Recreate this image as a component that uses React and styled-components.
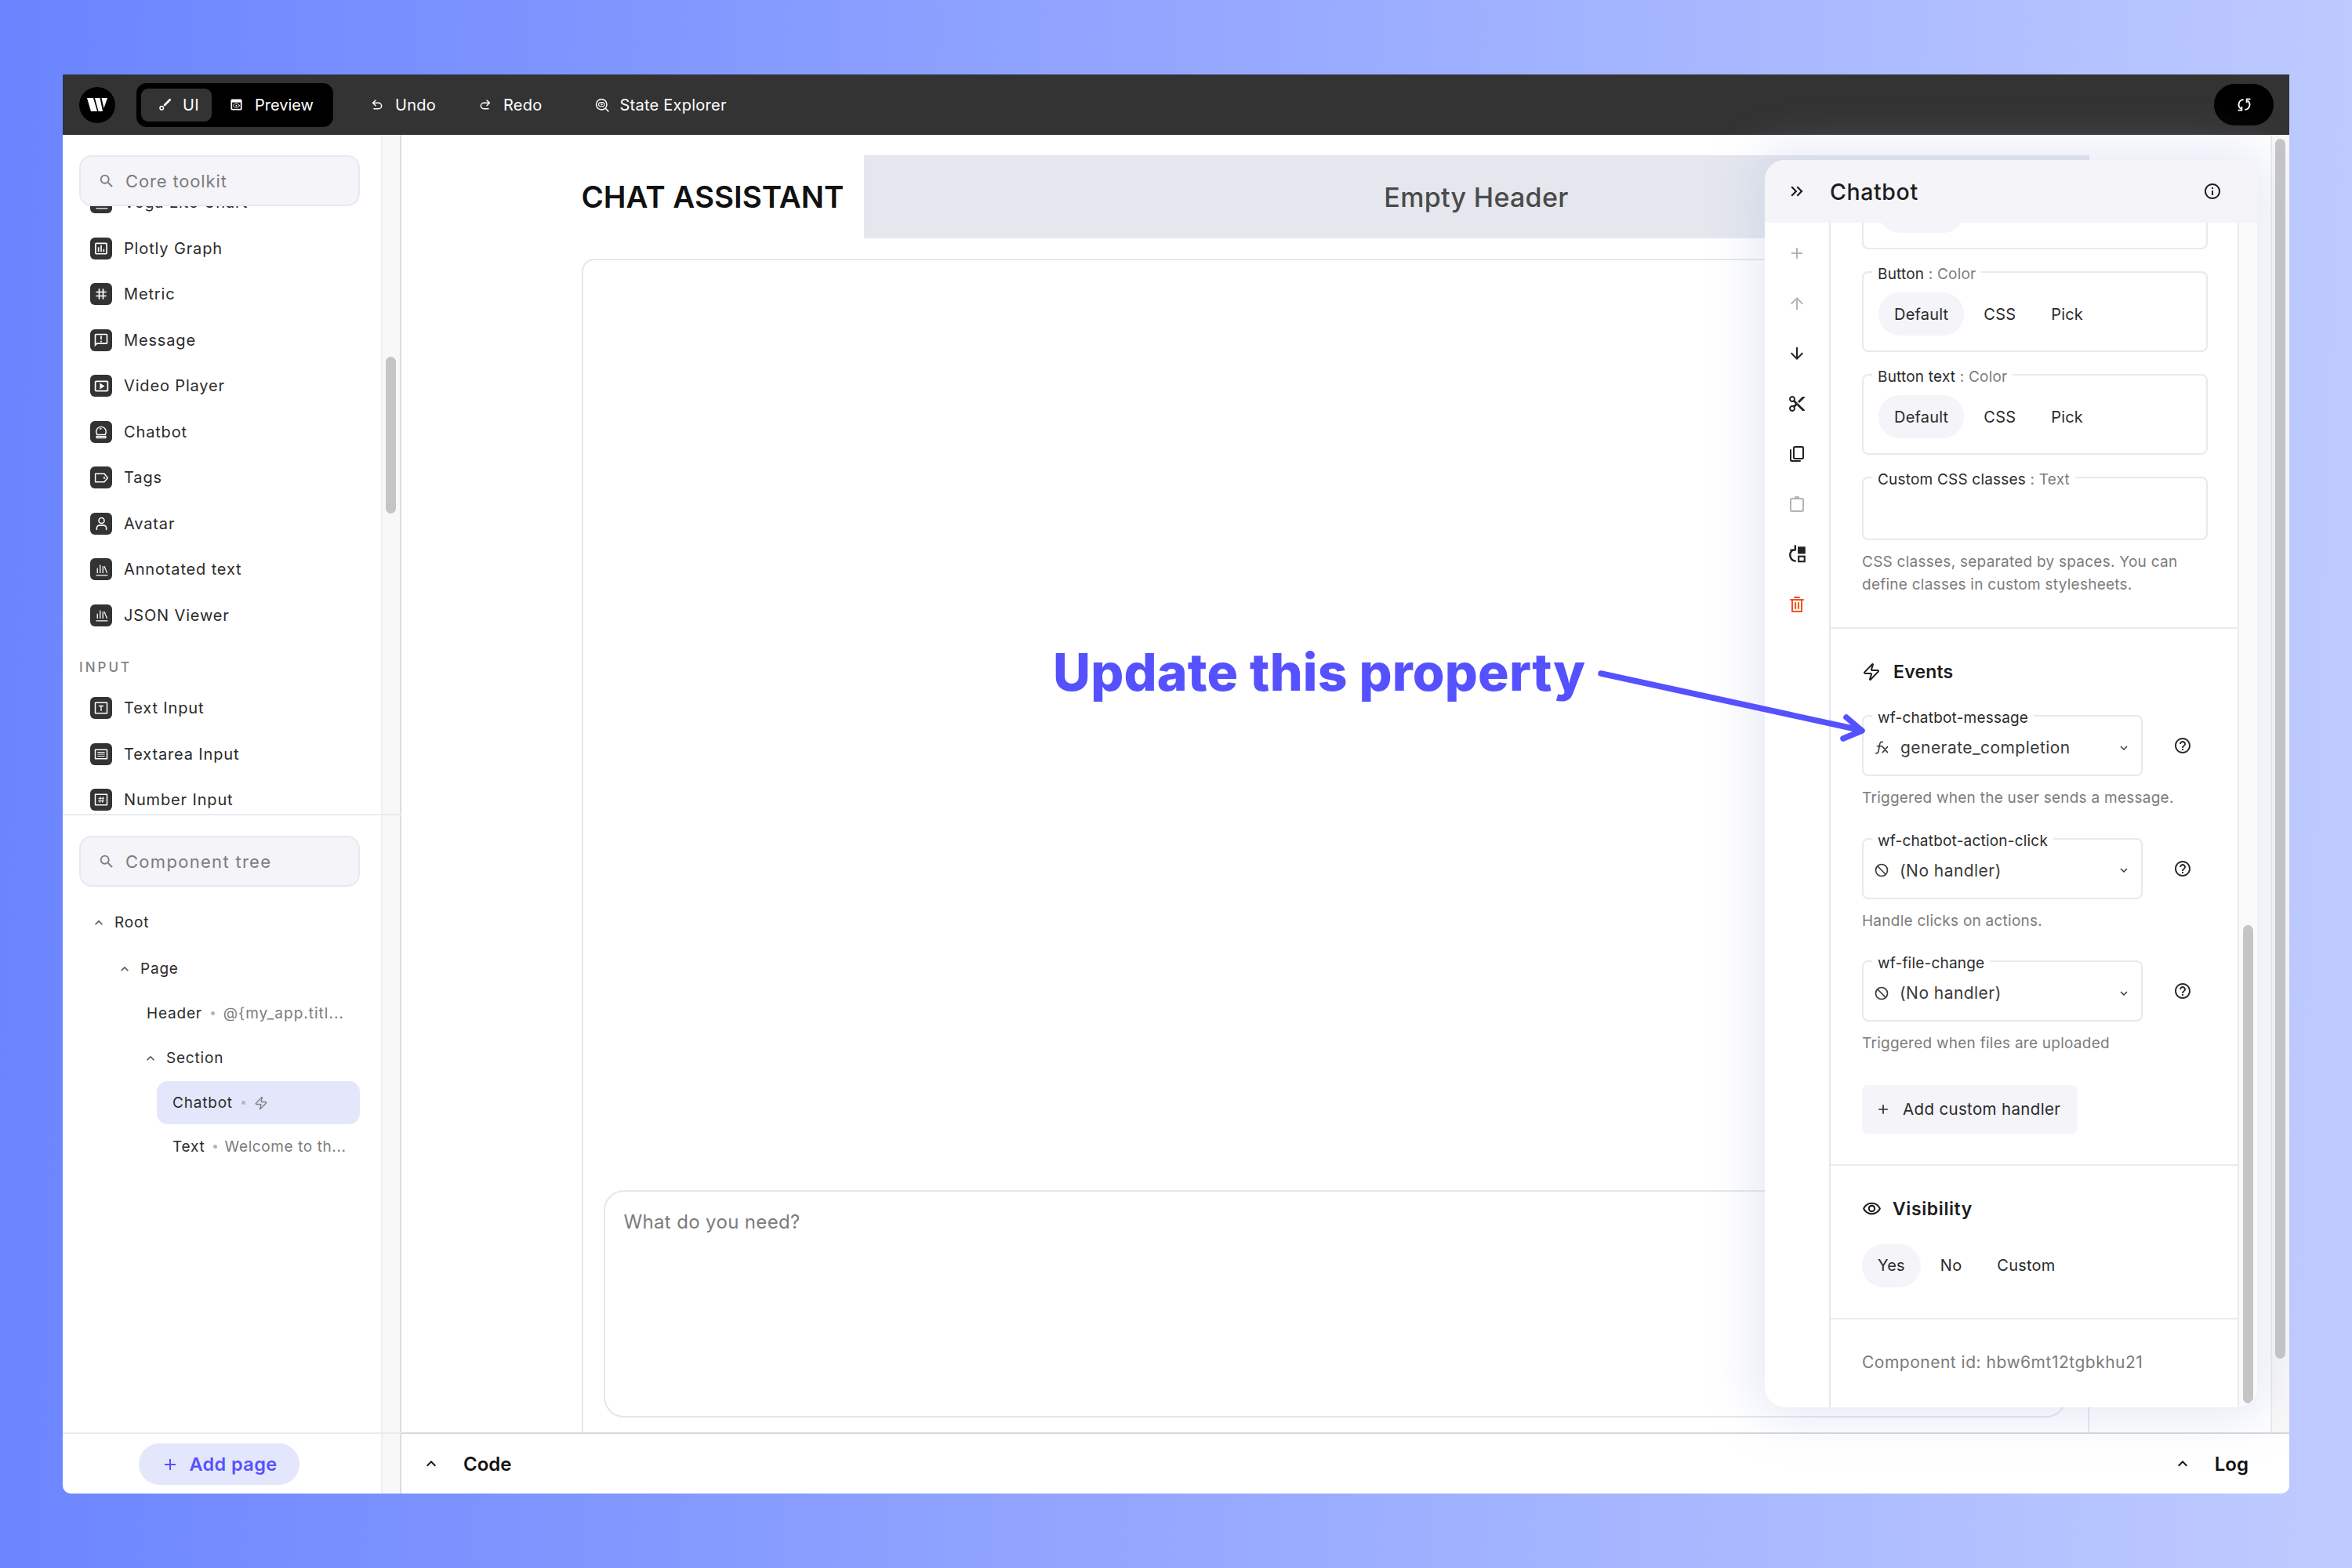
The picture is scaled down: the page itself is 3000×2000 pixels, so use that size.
import React from "react";
import styled, { createGlobalStyle } from "styled-components";
import {
  MdAdd,
  MdArrowDownward,
  MdArrowUpward,
  MdContentCut,
  MdExpandLess,
  MdExpandMore,
  MdHelpOutline,
  MdInfoOutline,
  MdInsertChartOutlined,
  MdKeyboardDoubleArrowRight,
  MdOutlineAnnouncement,
  MdOutlineRemoveRedEye,
  MdOutlineSmartDisplay,
  MdSearch,
  MdTag,
} from "react-icons/md";
import { Zap } from "lucide-react";

const GlobalStyle = createGlobalStyle`
  html, body {
    margin: 0;
    padding: 0;
  }

  body {
    width: 3000px;
    height: 2000px;
    font-family: "Inter", "Liberation Sans", sans-serif;
    color: #2b2b2b;
  }

  * {
    box-sizing: border-box;
  }
`;

const Page = styled.div`
  width: 3000px;
  height: 2000px;
  padding: 95px 80px 95px 80px;
  background: linear-gradient(92deg, #6a84ff 0%, #bfcbff 100%);
`;

const Frame = styled.div`
  position: relative;
  height: 100%;
  display: flex;
  flex-direction: column;
  background: white;
  border-radius: 0 0 10px 10px;
  overflow: hidden;
`;

/* ---- toolbar ---- */

const Toolbar = styled.header`
  height: 77px;
  flex: none;
  display: flex;
  align-items: center;
  padding: 0 20px 0 21px;
  background: #333333;
  color: white;
  font-size: 20px;
  line-height: 22px;
  letter-spacing: 0.25px;
`;

const Logo = styled.div`
  width: 46px;
  height: 46px;
  border-radius: 50%;
  background: black;
  display: flex;
  align-items: center;
  justify-content: center;
  margin-right: 27px;
`;

const ModeSwitch = styled.div`
  width: 251px;
  height: 56px;
  display: flex;
  align-items: center;
  padding: 0 6px;
  background: black;
  border-radius: 13px;
  margin-right: 48px;
`;

const ModeButton = styled.div`
  height: 42px;
  width: ${({ $wide }) => ($wide ? "145px" : "90px")};
  padding-left: ${({ $wide }) => ($wide ? "23px" : "21px")};
  display: flex;
  align-items: center;
  gap: ${({ $wide }) => ($wide ? "15px" : "14px")};
  border-radius: 9px;
  background: ${({ $active }) => ($active ? "#333333" : "transparent")};
  letter-spacing: ${({ $wide }) => ($wide ? "0" : "0.25px")};
`;

const ToolbarAction = styled.div`
  display: flex;
  align-items: center;
  gap: ${({ $inner }) => $inner || 15}px;
  margin-right: ${({ $gap }) => $gap || 0}px;
`;

const SyncButton = styled.div`
  width: 76px;
  height: 53px;
  margin-left: auto;
  border-radius: 27px;
  background: black;
  display: flex;
  align-items: center;
  justify-content: center;
`;

/* ---- workspace ---- */

const Workspace = styled.div`
  flex: 1;
  min-height: 0;
  display: flex;
`;

const Sidebar = styled.aside`
  width: 432px;
  flex: none;
  display: flex;
  flex-direction: column;
`;

const SidebarBand = styled.div`
  display: flex;
  flex: ${({ $grow }) => ($grow ? 1 : "none")};
  min-height: 0;
  height: ${({ $height }) => ($height ? `${$height}px` : "auto")};
  border-bottom: ${({ $line }) => ($line ? "2px solid #e9ebf1" : "none")};
`;

const Pane = styled.div`
  position: relative;
  width: 406px;
  flex: none;
  overflow: hidden;
  padding: ${({ $padding }) => $padding || "0"};
`;

const Gutter = styled.div`
  width: 26px;
  flex: none;
  background: #f8f8f8;
  border-left: 2px solid #efefef;
  border-right: 2px solid #dcdcdc;
  padding: ${({ $top }) => $top || 0}px 0 0 4px;
`;

const Thumb = styled.div`
  width: 13px;
  height: ${({ $height }) => $height}px;
  background: #c5c5c5;
  border-radius: 7px;
`;

const SearchBox = styled.div`
  position: ${({ $floating }) => ($floating ? "absolute" : "static")};
  top: 26px;
  left: 21px;
  width: 358px;
  height: 65px;
  display: flex;
  align-items: center;
  gap: 13px;
  padding-left: 22px;
  background: #f4f4f9;
  border: 2px solid #e8e9f0;
  border-radius: 16px;
  color: #7c7c7c;
  font-size: 22px;
  letter-spacing: ${({ $spacing }) => $spacing}px;
`;

const ComponentList = styled.div`
  padding-top: 57px;
`;

const ComponentRow = styled.div`
  height: 58.5px;
  display: flex;
  align-items: center;
  gap: 15px;
  padding-left: 35px;
  font-size: 20px;
  letter-spacing: 0.85px;
  color: #2b2b2b;
`;

const ComponentIcon = styled.span`
  width: 28px;
  height: 28px;
  flex: none;
  border-radius: 6px;
  background: #333333;
  color: white;
  display: flex;
  align-items: center;
  justify-content: center;
`;

const GroupLabel = styled.div`
  margin: 25px 0 11px 21px;
  line-height: 24px;
  font-size: 17px;
  font-weight: 500;
  letter-spacing: 3px;
  color: #828282;
`;

const Tree = styled.div`
  padding-top: 18px;
`;

const TreeRow = styled.div`
  height: 55px;
  margin-left: ${({ $indent }) => $indent}px;
  margin-bottom: ${({ $gap }) => $gap || 2}px;
  padding-left: ${({ $pad }) => $pad || 0}px;
  display: flex;
  align-items: center;
  border-radius: 14px;
  background: ${({ $selected }) => ($selected ? "#e4e7fb" : "transparent")};
  font-size: 19px;
  letter-spacing: 0.8px;
  white-space: nowrap;
`;

const TreeToggle = styled.span`
  width: 30px;
  flex: none;
  display: flex;
  color: #555;
`;

const TreeDot = styled.span`
  width: 5px;
  height: 5px;
  margin: 0 ${({ $margin }) => $margin || 11}px;
  border-radius: 50%;
  background: #b5b5b5;
  flex: none;
`;

const TreeNote = styled.span`
  color: #7c7c7c;
  display: flex;
  letter-spacing: ${({ $spacing }) => $spacing || 0.7}px;
`;

const SidebarFooter = styled.div`
  height: 76px;
  padding: 12px 0 0 97px;
`;

const AddPageButton = styled.div`
  width: 205px;
  height: 53px;
  border-radius: 27px;
  background: #e4e7fb;
  color: #5551ff;
  display: flex;
  align-items: center;
  justify-content: center;
  gap: 12px;
  font-size: 23.5px;
  font-weight: 600;
  letter-spacing: 0.4px;
`;

/* ---- main canvas ---- */

const Main = styled.main`
  flex: 1;
  min-width: 0;
  display: flex;
  flex-direction: column;
`;

const CanvasRow = styled.div`
  flex: 1;
  min-height: 0;
  display: flex;
`;

const Canvas = styled.div`
  flex: 1;
  min-width: 0;
  display: flex;
  justify-content: center;
`;

const CanvasGutter = styled.div`
  width: 24px;
  flex: none;
  background: #f8f8f8;
  border-left: 2px solid #ececec;
  padding: 5px 0 0 4px;
`;

const AppPage = styled.div`
  width: 1923px;
  margin-right: 2px;
  padding-top: 26px;
  display: flex;
  flex-direction: column;
`;

const AppHeader = styled.div`
  height: 106px;
  flex: none;
  display: flex;
`;

const AppTitle = styled.h1`
  width: 360px;
  flex: none;
  margin: 0;
  display: flex;
  align-items: center;
  font-size: 38.5px;
  font-weight: 600;
  letter-spacing: 0;
  color: #111;
  white-space: nowrap;
`;

const EmptyHeader = styled.div`
  flex: 1;
  display: flex;
  align-items: center;
  justify-content: center;
  background: #e4e7ed;
  color: #4a4a4a;
  font-size: 34px;
  font-weight: 500;
  letter-spacing: 0.3px;
`;

const ChatSection = styled.section`
  flex: 1;
  margin-top: 26px;
  padding: 0 27px 19px 26px;
  display: flex;
  align-items: flex-end;
  border: 2px solid #e4e7ed;
  border-bottom: none;
  border-radius: 16px 16px 0 0;
`;

const ChatInput = styled.div`
  width: 100%;
  height: 290px;
  padding: 24px 24px;
  border: 2px solid #e4e7ed;
  border-radius: 26px;
  color: #7c7c7c;
  font-size: 24px;
  letter-spacing: 0.35px;
`;

const BottomBar = styled.div`
  height: 78px;
  flex: none;
  display: flex;
  align-items: center;
  justify-content: space-between;
  padding: 0 52px 0 26px;
  border-top: 2px solid #d6d7dc;
  font-size: 24px;
  font-weight: 600;
  color: #111;
`;

const BarToggle = styled.div`
  display: flex;
  align-items: center;
  gap: 29px;
`;

/* ---- floating settings panel ---- */

const SettingsPanel = styled.div`
  position: absolute;
  top: 109px;
  right: 41px;
  width: 628px;
  height: 1591px;
  display: flex;
  flex-direction: column;
  background: white;
  border-radius: 26px;
  overflow: hidden;
  box-shadow: 0 0 60px 14px rgba(170, 180, 225, 0.28);
`;

const PanelHeader = styled.div`
  height: 80px;
  flex: none;
  display: flex;
  align-items: center;
  padding: 0 45px 0 28px;
  background: #f4f4f9;
  color: #1d1d1d;
`;

const PanelTitle = styled.h2`
  flex: 1;
  margin: 0 0 0 29px;
  font-size: 28.5px;
  font-weight: 500;
  letter-spacing: 0.6px;
`;

const PanelBody = styled.div`
  flex: 1;
  min-height: 0;
  display: flex;
`;

const ToolColumn = styled.div`
  width: 84px;
  flex: none;
  padding-top: 7px;
  border-right: 2px solid #e4e7ed;
`;

const ToolButton = styled.div`
  height: 64px;
  display: flex;
  align-items: center;
  justify-content: center;
  color: ${({ $tone }) =>
    $tone === "muted" ? "#b4b4b4" : $tone === "danger" ? "#f4511e" : "#222"};
`;

const PanelContent = styled.div`
  width: 521px;
  flex: none;
  overflow: hidden;
  border-right: 2px solid #e9ebf1;
`;

const PanelGutter = styled.div`
  flex: 1;
  background: #fafafa;
  padding: 896px 0 0 5px;
`;

const PanelSection = styled.div`
  padding: ${({ $top }) => $top}px 0 ${({ $bottom }) => $bottom || 40}px 40px;
  border-bottom: ${({ $last }) => ($last ? "none" : "2px solid #e9ebf1")};
`;

const SectionTitle = styled.div`
  height: 30px;
  margin-bottom: ${({ $gap }) => $gap}px;
  display: flex;
  align-items: center;
  gap: ${({ $iconGap }) => $iconGap}px;
  font-size: 23px;
  font-weight: 600;
  letter-spacing: ${({ $spacing }) => $spacing || 0.2}px;
  color: #1d1d1d;
`;

const Field = styled.div`
  position: relative;
  width: ${({ $width }) => $width}px;
  height: ${({ $height }) => $height}px;
  flex: none;
  margin-top: ${({ $top }) => $top || 0}px;
  padding: 25px 0 0 19px;
  border: 2px solid #e8e9f0;
  border-radius: 8px;
`;

const FieldLabel = styled.div`
  position: absolute;
  top: -10px;
  left: 11px;
  padding: 0 7px;
  line-height: 24px;
  background: white;
  font-size: 19px;
  letter-spacing: 0.2px;
  white-space: nowrap;
  color: #2b2b2b;
`;

const FieldType = styled.span`
  color: #7c7c7c;
`;

const PillRow = styled.div`
  display: flex;
  gap: 5px;
`;

const Pill = styled.div`
  height: 55px;
  padding: 0 20px;
  display: flex;
  align-items: center;
  border-radius: 27px;
  background: ${({ $active }) => ($active ? "#f4f4f9" : "transparent")};
  font-size: 20px;
  letter-spacing: 0.2px;
  color: #2b2b2b;
`;

const HelpText = styled.p`
  margin: 14px 0 0 0;
  width: 450px;
  line-height: 28.5px;
  font-size: 19px;
  letter-spacing: 0.25px;
  color: #7c7c7c;
`;

const EventRow = styled.div`
  display: flex;
  align-items: center;
  gap: 39px;
  margin-top: ${({ $top }) => $top || 0}px;
  color: #2b2b2b;
`;

const HandlerValue = styled.div`
  position: absolute;
  inset: 0;
  padding: 5px 13px 0 13px;
  display: flex;
  align-items: center;
  gap: 13px;
  font-size: 21px;
  letter-spacing: 0.45px;
  color: #3a3a3a;
`;

const HandlerChevron = styled.span`
  margin-left: auto;
  display: flex;
`;

const CustomHandlerButton = styled.div`
  width: 275px;
  height: 62px;
  margin-top: 38px;
  display: flex;
  align-items: center;
  gap: 15px;
  padding-left: 17px;
  background: #f4f4f9;
  border-radius: 8px;
  font-size: 20.5px;
  letter-spacing: 0.35px;
`;

const ComponentId = styled.div`
  line-height: 30px;
  font-size: 21px;
  letter-spacing: 0.5px;
  color: #7c7c7c;
`;

/* ---- annotation ---- */

const Annotation = styled.div`
  position: absolute;
  top: 725px;
  left: 1263px;
  line-height: 74px;
  font-size: 66px;
  font-weight: 800;
  letter-spacing: 0.2px;
  color: #5551ff;
  white-space: nowrap;
`;

const AnnotationArrow = styled.svg`
  position: absolute;
  top: 745px;
  left: 1940px;
`;

/* ---- drawn icons ---- */

const Svg = ({ size = 20, children, ...rest }) => (
  <svg
    width={size}
    height={size}
    viewBox="0 0 24 24"
    fill="none"
    stroke="currentColor"
    strokeWidth="2"
    strokeLinecap="round"
    strokeLinejoin="round"
    {...rest}
  >
    {children}
  </svg>
);

const BarsIcon = () => (
  <Svg size={21} strokeWidth="1.5" strokeLinecap="butt">
    <path d="M6 17V10M10 17V5M14 17V7M16 7l4 10M4 20.500h17" />
  </Svg>
);

const TextInputIcon = () => (
  <Svg>
    <rect x="3" y="4" width="18" height="16" strokeWidth="1.8" />
    <path d="M9 9h6M12 9v7" strokeWidth="1.6" />
  </Svg>
);

const TextareaIcon = () => (
  <Svg>
    <rect x="3" y="5" width="18" height="14" strokeWidth="1.8" />
    <path d="M7 9h10M7 12h10M7 15h10" strokeWidth="1.4" />
  </Svg>
);

const NumberInputIcon = () => (
  <Svg>
    <rect x="3" y="4" width="18" height="16" strokeWidth="1.8" />
    <path d="M8 10h8M8 14h8M11 8l-1 8M15 8l-1 8" strokeWidth="1.3" />
  </Svg>
);

const RobotIcon = () => (
  <Svg>
    <path d="M6 16a7.500 7.500 0 1 1 12 0" strokeWidth="1.7" />
    <path d="M6 16h12M5 21v-2.500h14V21z" strokeWidth="1.7" />
    <circle cx="11" cy="7" r="1" strokeWidth="1" />
  </Svg>
);

const TagIcon = () => (
  <Svg size={21} strokeWidth="1.7">
    <path d="M3 6h13l5 6-5 6H3z" />
    <circle cx="16" cy="12" r="0.600" />
  </Svg>
);

const PersonIcon = () => (
  <Svg size={21} strokeWidth="1.8">
    <circle cx="12" cy="8" r="4" />
    <path d="M5 21v-2a4 4 0 0 1 4-4h6a4 4 0 0 1 4 4v2" />
  </Svg>
);

const BrushIcon = () => (
  <Svg size={18}>
    <path d="M21 3L12 12" strokeWidth="3.500" />
    <circle cx="7" cy="17" r="3" />
  </Svg>
);

const PreviewIcon = () => (
  <Svg size={17}>
    <rect x="2" y="2" width="20" height="20" rx="2.500" fill="currentColor" stroke="none" />
    <rect x="4.500" y="8" width="15" height="11.500" fill="black" stroke="none" />
    <ellipse cx="12" cy="13.700" rx="5.500" ry="3.500" stroke="white" strokeWidth="1.300" />
    <circle cx="12" cy="13.700" r="1.400" fill="white" stroke="none" />
  </Svg>
);

const UndoIcon = () => (
  <Svg size={16} strokeWidth="2.200">
    <path d="M9 3L4 8l5 5" />
    <path d="M4 8h11a5.500 5.500 0 0 1 0 11H6" />
  </Svg>
);

const RedoIcon = () => (
  <Svg size={16} strokeWidth="2.200">
    <path d="M15 3l5 5-5 5" />
    <path d="M20 8H9a5.500 5.500 0 0 0 0 11h9" />
  </Svg>
);

const InspectIcon = () => (
  <Svg size={18}>
    <circle cx="11" cy="11" r="9" />
    <ellipse cx="11" cy="11" rx="5" ry="3.500" strokeWidth="1.500" />
    <circle cx="11" cy="11" r="1" strokeWidth="1.200" />
    <path d="M18 18l4.500 4.500" />
  </Svg>
);

const SyncIcon = () => (
  <Svg size={19} strokeWidth="2.400">
    <path d="M10 4a8 8 0 0 0-4 14" />
    <path d="M3 21h5v-5" />
    <path d="M14 20a8 8 0 0 0 4-14" />
    <path d="M21 3h-5v5" />
  </Svg>
);

const CopyIcon = () => (
  <Svg size={24} strokeWidth="2">
    <rect x="8" y="3" width="12" height="15" rx="1.500" />
    <path d="M4 7v12.500A1.500 1.500 0 0 0 5.500 21H16" />
  </Svg>
);

const PasteIcon = () => (
  <Svg size={24} strokeWidth="2">
    <rect x="4" y="5" width="16" height="16" rx="1.500" />
    <path d="M10 5V3h4v2" />
  </Svg>
);

const MoveIcon = () => (
  <Svg size={26} strokeWidth="2.200">
    <path d="M10 20a7 7 0 0 1-2.500-13" />
    <path d="M10 2v5H5" />
    <rect x="13" y="3" width="9" height="8.500" fill="currentColor" stroke="none" />
    <rect x="14" y="14.500" width="7" height="6" strokeWidth="2" strokeLinejoin="miter" />
  </Svg>
);

const TrashIcon = () => (
  <Svg size={24} strokeWidth="2" strokeLinejoin="miter">
    <path d="M4 6h16M9 3h6M6 6v15h12V6M10 10v7M14 10v7" />
  </Svg>
);

const FunctionIcon = () => (
  <Svg size={21} strokeWidth="1.800">
    <path d="M13 4c-3-1-4 1-4.500 4L7 17c-.5 3-2 4-4 3" />
    <path d="M5 10h7" />
    <path d="M13 11l7 8M20 11l-7 8" />
  </Svg>
);

const NoHandlerIcon = () => (
  <Svg size={20} strokeWidth="2">
    <circle cx="12" cy="12" r="9" />
    <path d="M5.700 5.700l12.600 12.600" />
  </Svg>
);

const WriterLogo = () => (
  <svg width="26" height="17" viewBox="0 0 26 17" fill="white">
    <path d="M0 0h8l5 17H5z" />
    <path d="M10 0h6.500l3.500 17h-5.500z" />
    <path d="M18.500 0H26l-4.500 13z" />
  </svg>
);

const components = [
  ["Vega Lite Chart", <BarsIcon />],
  ["Plotly Graph", <MdInsertChartOutlined size={20} />],
  ["Metric", <MdTag size={20} />],
  ["Message", <MdOutlineAnnouncement size={20} />],
  ["Video Player", <MdOutlineSmartDisplay size={21} />],
  ["Chatbot", <RobotIcon />],
  ["Tags", <TagIcon />],
  ["Avatar", <PersonIcon />],
  ["Annotated text", <BarsIcon />],
  ["JSON Viewer", <BarsIcon />],
];

const inputs = [
  ["Text Input", <TextInputIcon />],
  ["Textarea Input", <TextareaIcon />],
  ["Number Input", <NumberInputIcon />],
];

const tools = [
  [<MdAdd size={24} />, "muted"],
  [<MdArrowUpward size={24} />, "muted"],
  [<MdArrowDownward size={24} />],
  [<MdContentCut size={24} />],
  [<CopyIcon />],
  [<PasteIcon />, "muted"],
  [<MoveIcon />],
  [<TrashIcon />, "danger"],
];

const events = [
  {
    name: "wf-chatbot-message",
    value: "generate_completion",
    icon: <FunctionIcon />,
    help: "Triggered when the user sends a message.",
  },
  {
    name: "wf-chatbot-action-click",
    value: "(No handler)",
    icon: <NoHandlerIcon />,
    help: "Handle clicks on actions.",
  },
  {
    name: "wf-file-change",
    value: "(No handler)",
    icon: <NoHandlerIcon />,
    help: "Triggered when files are uploaded",
  },
];

const ComponentItem = ({ item }) => (
  <ComponentRow>
    <ComponentIcon>{item[1]}</ComponentIcon>
    {item[0]}
  </ComponentRow>
);

const ColorField = ({ name, top }) => (
  <Field $width={441} $height={103} $top={top}>
    <FieldLabel>
      {name} <FieldType>: Color</FieldType>
    </FieldLabel>
    <PillRow>
      <Pill $active>Default</Pill>
      <Pill>CSS</Pill>
      <Pill>Pick</Pill>
    </PillRow>
  </Field>
);

const App = () => {
  return (
    <Page>
      <GlobalStyle />
      <Frame>
        <Toolbar>
          <Logo>
            <WriterLogo />
          </Logo>
          <ModeSwitch>
            <ModeButton $active>
              <BrushIcon />
              UI
            </ModeButton>
            <ModeButton $wide>
              <PreviewIcon />
              Preview
            </ModeButton>
          </ModeSwitch>
          <ToolbarAction $gap={55}>
            <UndoIcon />
            Undo
          </ToolbarAction>
          <ToolbarAction $gap={68}>
            <RedoIcon />
            Redo
          </ToolbarAction>
          <ToolbarAction $inner={13}>
            <InspectIcon />
            State Explorer
          </ToolbarAction>
          <SyncButton>
            <SyncIcon />
          </SyncButton>
        </Toolbar>

        <Workspace>
          <Sidebar>
            <SidebarBand $height={868} $line>
              <Pane>
                <SearchBox $floating $spacing={0.85}>
                  <MdSearch size={22} />
                  Core toolkit
                </SearchBox>
                <ComponentList>
                  {components.map((item) => (
                    <ComponentItem key={item[0]} item={item} />
                  ))}
                  <GroupLabel>INPUT</GroupLabel>
                  {inputs.map((item) => (
                    <ComponentItem key={item[0]} item={item} />
                  ))}
                </ComponentList>
              </Pane>
              <Gutter $top={283}>
                <Thumb $height={200} />
              </Gutter>
            </SidebarBand>

            <SidebarBand $grow $line>
              <Pane $padding="26px 27px 0 21px">
                <SearchBox $spacing={1.3}>
                  <MdSearch size={22} />
                  Component tree
                </SearchBox>
                <Tree>
                  <TreeRow $indent={15} $gap={4}>
                    <TreeToggle>
                      <MdExpandLess size={20} />
                    </TreeToggle>
                    Root
                  </TreeRow>
                  <TreeRow $indent={48}>
                    <TreeToggle>
                      <MdExpandLess size={20} />
                    </TreeToggle>
                    Page
                  </TreeRow>
                  <TreeRow $indent={86}>
                    Header
                    <TreeDot />
                    <TreeNote $spacing={1}>@&#123;my_app.titl...</TreeNote>
                  </TreeRow>
                  <TreeRow $indent={81}>
                    <TreeToggle>
                      <MdExpandLess size={20} />
                    </TreeToggle>
                    Section
                  </TreeRow>
                  <TreeRow $indent={99} $pad={20} $selected $gap={1}>
                    Chatbot
                    <TreeDot />
                    <TreeNote>
                      <Zap size={18} strokeWidth={1.8} />
                    </TreeNote>
                  </TreeRow>
                  <TreeRow $indent={99} $pad={20}>
                    Text
                    <TreeDot $margin={10} />
                    <TreeNote $spacing={0.6}>Welcome to th...</TreeNote>
                  </TreeRow>
                </Tree>
              </Pane>
              <Gutter />
            </SidebarBand>

            <SidebarBand>
              <Pane>
                <SidebarFooter>
                  <AddPageButton>
                    <MdAdd size={24} />
                    Add page
                  </AddPageButton>
                </SidebarFooter>
              </Pane>
              <Gutter />
            </SidebarBand>
          </Sidebar>

          <Main>
            <CanvasRow>
              <Canvas>
                <AppPage>
                  <AppHeader>
                    <AppTitle>CHAT ASSISTANT</AppTitle>
                    <EmptyHeader>Empty Header</EmptyHeader>
                  </AppHeader>
                  <ChatSection>
                    <ChatInput>What do you need?</ChatInput>
                  </ChatSection>
                </AppPage>
              </Canvas>
              <CanvasGutter>
                <Thumb $height={1556} />
              </CanvasGutter>
            </CanvasRow>
            <BottomBar>
              <BarToggle>
                <MdExpandLess size={24} />
                Code
              </BarToggle>
              <BarToggle>
                <MdExpandLess size={24} />
                Log
              </BarToggle>
            </BottomBar>
          </Main>
        </Workspace>

        <SettingsPanel>
          <PanelHeader>
            <MdKeyboardDoubleArrowRight size={26} />
            <PanelTitle>Chatbot</PanelTitle>
            <MdInfoOutline size={24} />
          </PanelHeader>
          <PanelBody>
            <ToolColumn>
              {tools.map((tool, idx) => (
                <ToolButton key={idx} $tone={tool[1]}>
                  {tool[0]}
                </ToolButton>
              ))}
            </ToolColumn>
            <PanelContent>
              <PanelSection $top={0}>
                <Field $width={441} $height={103} $top={-69}>
                  <PillRow>
                    <Pill $active>Default</Pill>
                  </PillRow>
                </Field>
                <ColorField name="Button" top={28} />
                <ColorField name="Button text" top={28} />
                <Field $width={441} $height={81} $top={28}>
                  <FieldLabel>
                    Custom CSS classes <FieldType>: Text</FieldType>
                  </FieldLabel>
                </Field>
                <HelpText>
                  CSS classes, separated by spaces. You can define classes in custom stylesheets.
                </HelpText>
              </PanelSection>

              <PanelSection $top={40} $bottom={39}>
                <SectionTitle $gap={40} $iconGap={16}>
                  <Zap size={24} strokeWidth={2} />
                  Events
                </SectionTitle>
                {events.map((event, idx) => (
                  <div key={event.name}>
                    <EventRow $top={idx === 0 ? 0 : 36}>
                      <Field $width={358} $height={78}>
                        <FieldLabel>{event.name}</FieldLabel>
                        <HandlerValue>
                          {event.icon}
                          {event.value}
                          <HandlerChevron>
                            <MdExpandMore size={18} />
                          </HandlerChevron>
                        </HandlerValue>
                      </Field>
                      <MdHelpOutline size={24} />
                    </EventRow>
                    <HelpText>{event.help}</HelpText>
                  </div>
                ))}
                <CustomHandlerButton>
                  <MdAdd size={20} />
                  Add custom handler
                </CustomHandlerButton>
              </PanelSection>

              <PanelSection $top={40} $bottom={39}>
                <SectionTitle $gap={30} $iconGap={14} $spacing={0.6}>
                  <MdOutlineRemoveRedEye size={25} />
                  Visibility
                </SectionTitle>
                <PillRow>
                  <Pill $active>Yes</Pill>
                  <Pill>No</Pill>
                  <Pill>Custom</Pill>
                </PillRow>
              </PanelSection>

              <PanelSection $top={40} $last>
                <ComponentId>Component id: hbw6mt12tgbkhu21</ComponentId>
              </PanelSection>
            </PanelContent>
            <PanelGutter>
              <Thumb $height={610} />
            </PanelGutter>
          </PanelBody>
        </SettingsPanel>

        <Annotation>Update this property</Annotation>
        <AnnotationArrow width="460" height="120" viewBox="0 0 460 120" fill="none">
          <path
            d="M22 19 L352 91 M335 75 L355 92 L331 102"
            stroke="#5551ff"
            strokeWidth="7.500"
            strokeLinecap="round"
            strokeLinejoin="round"
          />
        </AnnotationArrow>
      </Frame>
    </Page>
  );
};

export default App;
